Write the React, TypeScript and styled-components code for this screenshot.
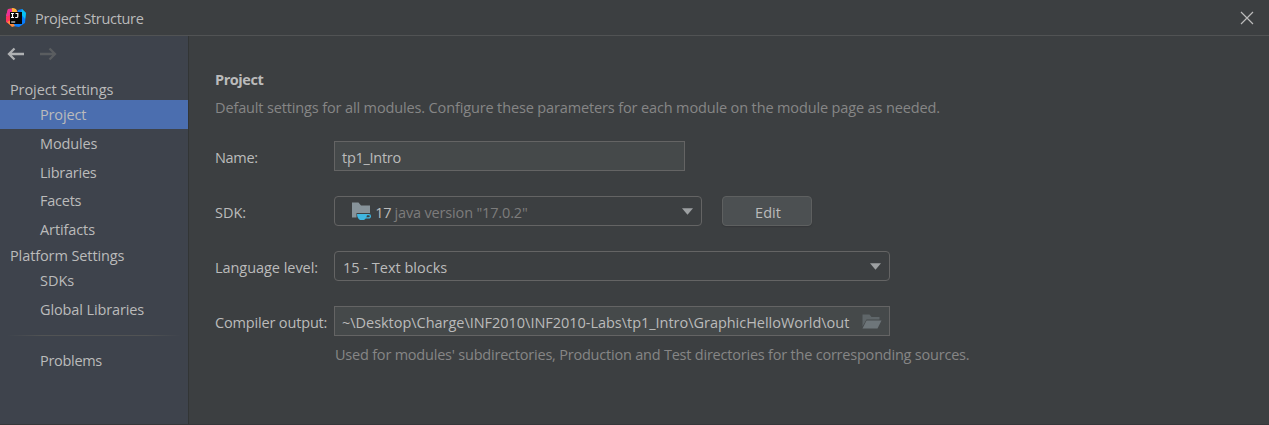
import React from "react";
import styled, { createGlobalStyle } from "styled-components";

const GlobalStyle = createGlobalStyle`
  * { box-sizing: border-box; }
  body {
    margin: 0;
    background: #3c3f41;
    overflow: hidden;
  }
`;

const Window = styled.div`
  height: 425px;
  display: flex;
  flex-direction: column;
  background: #3c3f41;
  color: #bbbbbb;
  font: 14.5px/20px "Open Sans", "Noto Sans", sans-serif;
  border-bottom: 1px solid #35373a;
`;

const TitleBar = styled.header`
  flex: none;
  height: 36px;
  display: flex;
  align-items: center;
  padding: 0 15px 0 6px;
  border-bottom: 1px solid #515354;
`;

const Title = styled.div`
  flex: 1;
  padding-left: 9px;
  padding-top: 2px;
`;

const Body = styled.div`
  flex: 1;
  min-height: 0;
  display: flex;
`;

const Sidebar = styled.nav`
  width: 189px;
  flex: none;
  background: #3e434c;
  border-right: 1px solid #323535;
`;

const History = styled.div`
  height: 43px;
  padding: 10px 0 0 7px;
  display: flex;
  gap: 16px;
`;

const Group = styled.div<{ $h: number }>`
  height: ${(p) => p.$h}px;
  line-height: ${(p) => p.$h}px;
  padding-left: 10px;
  white-space: nowrap;
`;

const PlatformGroup = styled(Group)`
  line-height: 24px;
`;

const Item = styled.div<{ $selected?: boolean }>`
  height: 28.8px;
  line-height: 29px;
  padding-left: 40px;
  white-space: nowrap;
  background: ${(p) => (p.$selected ? "#4b6eaf" : "transparent")};
`;

const Divider = styled.div`
  height: 1px;
  margin: 11px 7px 10px;
  background: linear-gradient(90deg, transparent, #515354 20%, #515354 80%, transparent);
`;

const Text = styled.span<{ $track?: number }>`
  white-space: pre;
  letter-spacing: ${(p) => p.$track ?? 0}px;
`;

const Muted = styled(Text)`
  color: #868686;
`;

const Version = styled(Text)`
  color: #7c7c7c;
`;

const Content = styled.main`
  flex: 1;
  padding: 33px 0 0 26px;
`;

const Heading = styled.h1`
  margin: 0;
  font-size: 14.5px;
  line-height: 22px;
  font-weight: 700;
`;

const Description = styled.p`
  margin: 6px 0 23px;
  line-height: 21px;
`;

const Row = styled.div`
  display: flex;
  align-items: center;
  height: 30px;
  margin-bottom: 25px;
`;

const FieldLabel = styled.label`
  width: 119px;
  flex: none;
  padding-top: 3px;
`;

const Field = styled.div<{ $w: number }>`
  width: ${(p) => p.$w}px;
  height: 30px;
  display: flex;
  align-items: center;
  padding: 0 7px;
  background: #45494a;
  border: 1px solid #646464;

  & > span {
    padding-top: 3px;
  }
`;

const Combo = styled(Field)`
  background: #3c3f41;
  border-radius: 4px;
  padding: 0 8px;
`;

const Spacer = styled.div`
  flex: 1;
`;

const IconInset = styled.div`
  flex: 0 0 9px;
`;

const Button = styled.button`
  width: 90px;
  height: 30px;
  margin-left: 20px;
  padding: 3px 0 0 2px;
  font: inherit;
  color: #bbbbbb;
  background: #4c5052;
  border: 1px solid #5e6060;
  border-radius: 4px;
  box-shadow: 0 1px 1px #35373a;
`;

const Hint = styled.p`
  margin: -16px 0 0 120px;
`;

const Logo = () => (
  <svg width="20" height="20" viewBox="0 0 20 20">
    <path d="M2 1 8 0l5 5-4 13-8-4 1-4-2-2z" fill="#fc6b3c" />
    <path d="M2 1h5l4 4-9 5-2-2z" fill="#e9319a" />
    <path d="m6 0 4 1 2 4-6 1z" fill="#fdb33c" />
    <path d="m0 9 6-3v12l-6-4z" fill="#fe315d" />
    <path d="m12 2 4-1 4 4-1 10-6 4-6-1z" fill="#087cfa" />
    <path d="m16 1 4 4-1 6-4-5z" fill="#07c3f2" />
    <path d="m1 14 4-2 4 6-3 1z" fill="#fd8a3c" />
    <rect x="4" y="4" width="12" height="12" fill="#050505" />
    <path d="M5 5.5h3M6.5 5.5v4M5 9.5h3M9.5 5.5h2.3v3q0 1-1 1H9.2M5.2 14h4" stroke="#fff" strokeWidth="1.2" fill="none" />
  </svg>
);

const Arrow = ({ forward }: { forward?: boolean }) => (
  <svg width="17" height="16" viewBox="0 0 17 16" fill="none"
    stroke={forward ? "#5a5d60" : "#afb1b3"} strokeWidth="2.3">
    {forward ? <path d="M0 8h15M9.5 2.5 15 8 9.5 13.5" /> : <path d="M17 8H2M7.5 2.5 2 8l5.5 5.5" />}
  </svg>
);

const CloseIcon = () => (
  <svg width="14" height="14" viewBox="0 0 14 14">
    <path d="m1 1 12 12M13 1 1 13" stroke="#bbbbbb" strokeWidth="1.2" />
  </svg>
);

const Chevron = () => (
  <svg width="11" height="7" viewBox="0 0 11 7">
    <path d="M0 .3h11L5.5 6.7z" fill="#9da0a2" />
  </svg>
);

const SdkIcon = () => (
  <svg width="20" height="19" viewBox="0 0 20 19">
    <path d="M0 .5h6.5L9 3.5h9V11H4.5v4.500H0z" fill="#87939a" />
    <path d="M5 12h10q0 4-3 6h-4Q5 16 5 12z" fill="#40b6e0" />
    <path d="M14 12.7h2.800a1.600 1.600 0 0 1 0 3.200H13.500" stroke="#40b6e0" strokeWidth="1.3" fill="none" />
  </svg>
);

const FolderOpen = () => (
  <svg width="20" height="15" viewBox="0 0 20 15">
    <path d="M0.5 12.500V.5h7l2 2.500h8v2.500H4.500z" fill="#5f6669" />
    <path d="M4.5 6.500H19.500l-4 8H.5z" fill="#6e767a" />
  </svg>
);

export default function App() {
  return (
    <Window>
      <GlobalStyle />
      <TitleBar>
        <Logo />
        <Title><Text $track={-0.33}>Project Structure</Text></Title>
        <CloseIcon />
      </TitleBar>
      <Body>
        <Sidebar>
          <History>
            <Arrow />
            <Arrow forward />
          </History>
          <Group $h={21}><Text $track={-0.1}>Project Settings</Text></Group>
          <Item $selected><Text $track={-0.15}>Project</Text></Item>
          <Item><Text $track={-0.14}>Modules</Text></Item>
          <Item><Text $track={-0.25}>Libraries</Text></Item>
          <Item><Text $track={-0.25}>Facets</Text></Item>
          <Item><Text $track={-0.1}>Artifacts</Text></Item>
          <PlatformGroup $h={22}><Text $track={-0.1}>Platform Settings</Text></PlatformGroup>
          <Item><Text>SDKs</Text></Item>
          <Item><Text $track={-0.12}>Global Libraries</Text></Item>
          <Divider />
          <Item><Text $track={-0.3}>Problems</Text></Item>
        </Sidebar>
        <Content>
          <Heading><Text $track={-0.45}>Project</Text></Heading>
          <Description>
            <Muted $track={-0.136}>Default settings for all modules. Configure these parameters for each module on the module page as needed.</Muted>
          </Description>
          <Row>
            <FieldLabel><Text $track={-0.3}>Name:</Text></FieldLabel>
            <Field $w={351}><Text $track={-0.28}>tp1_Intro</Text></Field>
          </Row>
          <Row>
            <FieldLabel><Text>SDK:</Text></FieldLabel>
            <Combo $w={368}>
              <IconInset />
              <SdkIcon />
              <Text $track={-0.4}> 17 </Text>
              <Version $track={-0.16}>java version "17.0.2"</Version>
              <Spacer />
              <Chevron />
            </Combo>
            <Button><Text>Edit</Text></Button>
          </Row>
          <Row>
            <FieldLabel><Text $track={-0.05}>Language level:</Text></FieldLabel>
            <Combo $w={556}>
              <Text>15 - Text blocks</Text>
              <Spacer />
              <Chevron />
            </Combo>
          </Row>
          <Row>
            <FieldLabel><Text $track={-0.16}>Compiler output:</Text></FieldLabel>
            <Field $w={556}>
              <Text $track={-0.03}>~\Desktop\Charge\INF2010\INF2010-Labs\tp1_Intro\GraphicHelloWorld\out</Text>
              <Spacer />
              <FolderOpen />
            </Field>
          </Row>
          <Hint>
            <Muted $track={-0.212}>Used for modules' subdirectories, Production and Test directories for the corresponding sources.</Muted>
          </Hint>
        </Content>
      </Body>
    </Window>
  );
}
